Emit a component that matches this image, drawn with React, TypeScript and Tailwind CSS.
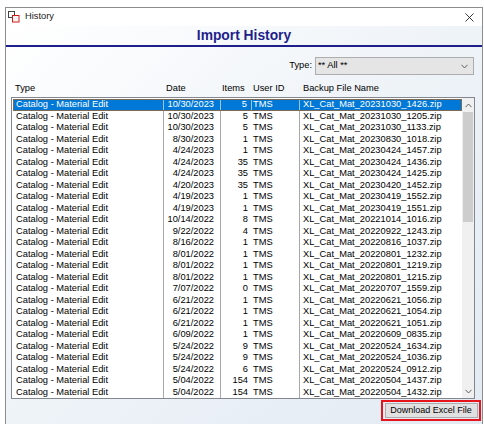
import React from "react";

type Row = { date: string; items: string; file: string };

const rows: Row[] = [
  { date: "10/30/2023", items: "5", file: "20231030_1426" },
  { date: "10/30/2023", items: "5", file: "20231030_1205" },
  { date: "10/30/2023", items: "5", file: "20231030_1133" },
  { date: "8/30/2023", items: "1", file: "20230830_1018" },
  { date: "4/24/2023", items: "1", file: "20230424_1457" },
  { date: "4/24/2023", items: "35", file: "20230424_1436" },
  { date: "4/24/2023", items: "35", file: "20230424_1425" },
  { date: "4/20/2023", items: "35", file: "20230420_1452" },
  { date: "4/19/2023", items: "1", file: "20230419_1552" },
  { date: "4/19/2023", items: "1", file: "20230419_1551" },
  { date: "10/14/2022", items: "8", file: "20221014_1016" },
  { date: "9/22/2022", items: "4", file: "20220922_1243" },
  { date: "8/16/2022", items: "1", file: "20220816_1037" },
  { date: "8/01/2022", items: "1", file: "20220801_1232" },
  { date: "8/01/2022", items: "1", file: "20220801_1219" },
  { date: "8/01/2022", items: "1", file: "20220801_1215" },
  { date: "7/07/2022", items: "0", file: "20220707_1559" },
  { date: "6/21/2022", items: "1", file: "20220621_1056" },
  { date: "6/21/2022", items: "1", file: "20220621_1054" },
  { date: "6/21/2022", items: "1", file: "20220621_1051" },
  { date: "6/09/2022", items: "1", file: "20220609_0835" },
  { date: "5/24/2022", items: "9", file: "20220524_1634" },
  { date: "5/24/2022", items: "9", file: "20220524_1036" },
  { date: "5/24/2022", items: "6", file: "20220524_0912" },
  { date: "5/04/2022", items: "154", file: "20220504_1437" },
  { date: "5/04/2022", items: "154", file: "20220504_1432" },
];

function WindowIcon() {
  return (
    <svg width="12" height="12" viewBox="0 0 12 12">
      <rect x="0.5" y="0.5" width="6" height="6" fill="#fff" stroke="#444" />
      <rect x="4.5" y="4.5" width="6.5" height="6.5" fill="#fff" stroke="#d01818" />
      <rect x="5.5" y="5.5" width="4.5" height="4.5" fill="#f2f2f2" />
    </svg>
  );
}

function CloseIcon() {
  return (
    <svg width="9" height="9" viewBox="0 0 9 9">
      <path d="M0.5 0.5 L8.5 8.5 M8.5 0.5 L0.5 8.5" stroke="#222" strokeWidth="0.9" fill="none" />
    </svg>
  );
}

function Chevron({ up }: { up?: boolean }) {
  return (
    <svg width="7" height="5" viewBox="0 0 7 5">
      <path
        d={up ? "M0.5 4.2 L3.5 1 L6.5 4.2" : "M0.5 0.8 L3.5 4 L6.5 0.8"}
        fill="none"
        stroke="#606060"
        strokeWidth="1"
      />
    </svg>
  );
}

export default function App() {
  return (
    <div
      className="w-[484px] h-[424px] overflow-hidden bg-white pl-[5px] pt-[7px] text-black"
      style={{ fontFamily: '"Liberation Sans", Arial, sans-serif' }}
    >
      <div className="w-[478px] h-[430px] border border-[#8c8c8c] flex flex-col">
        {/* title bar */}
        <div className="h-[18px] bg-white flex items-center pl-[2px] pr-[8px] shrink-0">
          <WindowIcon />
          <span className="ml-[5px] text-[9.3px] text-[#1a1a1a]">History</span>
          <span className="ml-auto flex">
            <CloseIcon />
          </span>
        </div>

        <div className="flex-1 flex flex-col bg-linear-to-br from-[#ffffff] via-[#eef3f8] to-[#e3eaf3]">
          <div className="h-[19px] flex items-center justify-center text-[13.8px] font-bold text-[#1f1f8c] leading-none">
            Import History
          </div>
          <div className="h-[2px] bg-[#1f1f8c]" />

          {/* type filter */}
          <div className="mt-[10px] h-[18px] flex items-center justify-end pr-[8px] text-[9.3px]">
            <span className="mr-[3px]">Type:</span>
            <div className="w-[159px] h-[18px] bg-[#e5e5e5] border border-[#adadad] flex items-center pl-[2px] pr-[5px]">
              <span>** All **</span>
              <span className="ml-auto flex">
                <Chevron />
              </span>
            </div>
          </div>

          {/* column headers */}
          <div className="mt-[8px] h-[12px] ml-[7px] flex items-center text-[9.3px] leading-none">
            <div className="w-[151px] pl-[2px]">Type</div>
            <div className="w-[57px] pl-[2px]">Date</div>
            <div className="w-[31px] pl-[1px]">Items</div>
            <div className="w-[48px] pl-[1px]">User ID</div>
            <div className="w-[162px] pl-[3px]">Backup File Name</div>
          </div>

          {/* list */}
          <div className="mt-[2px] ml-[5px] w-[464px] h-[302px] border border-[#828790] bg-white flex">
            <div className="w-[450px] pl-[1px] pt-[1px] flex flex-col">
              {rows.map((r, i) => {
                const sel = i === 0;
                const line = sel ? "border-[#9cc6ee]" : "border-[#a8a8a8]";
                return (
                  <div
                    key={i}
                    className={`h-[11.5px] flex text-[9.3px] leading-[11.5px] whitespace-nowrap ${
                      sel ? "bg-[#0078d7] text-white outline outline-1 -outline-offset-1 outline-[#7d6a55]" : ""
                    }`}
                  >
                    <div className={`w-[151px] pl-[3px] border-r ${line}`}>Catalog - Material Edit</div>
                    <div className={`w-[57px] pr-[6px] text-right border-r ${line}`}>{r.date}</div>
                    <div className={`w-[31px] pr-[4px] text-right ${sel ? "border-r border-[#9cc6ee]" : ""}`}>
                      {r.items}
                    </div>
                    <div className={`w-[48px] pl-[1px] border-r ${line}`}>TMS</div>
                    <div className="w-[162px] pl-[3px]">XL_Cat_Mat_{r.file}.zip</div>
                  </div>
                );
              })}
            </div>
            {/* scrollbar */}
            <div className="w-[12px] h-full bg-[#f0f0f0] flex flex-col items-center">
              <div className="h-[14px] w-full flex items-center justify-center">
                <Chevron up />
              </div>
              <div className="w-[10px] h-[110px] bg-[#cdcdcd]" />
              <div className="flex-1" />
              <div className="h-[14px] w-full flex items-center justify-center">
                <Chevron />
              </div>
            </div>
          </div>

          {/* footer */}
          <div className="mt-[1px] flex justify-end pr-[1px]">
            <div className="w-[100px] h-[21px] border-2 border-[#e8141c] flex items-center justify-center">
              <div className="w-[93px] h-[15px] bg-[#e1e1e1] border border-[#adadad] flex items-center justify-center text-[9px] leading-none whitespace-nowrap">
                Download Excel File
              </div>
            </div>
          </div>
        </div>
      </div>
    </div>
  );
}
